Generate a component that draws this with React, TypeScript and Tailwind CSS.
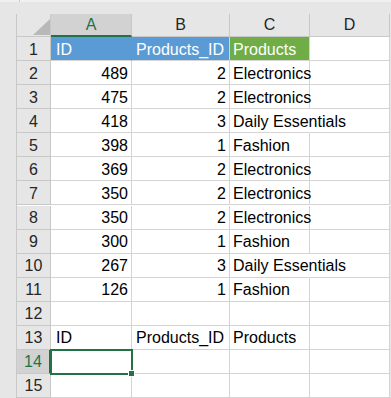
import React from 'react';

type Row = { id: number; pid: number; product: string };

const data: Row[] = [
  { id: 489, pid: 2, product: 'Electronics' },
  { id: 475, pid: 2, product: 'Electronics' },
  { id: 418, pid: 3, product: 'Daily Essentials' },
  { id: 398, pid: 1, product: 'Fashion' },
  { id: 369, pid: 2, product: 'Electronics' },
  { id: 350, pid: 2, product: 'Electronics' },
  { id: 350, pid: 2, product: 'Electronics' },
  { id: 300, pid: 1, product: 'Fashion' },
  { id: 267, pid: 3, product: 'Daily Essentials' },
  { id: 126, pid: 1, product: 'Fashion' },
];

const cell = 'h-[24px] border-r border-b border-[#d4d4d4] flex items-center pt-[2px] whitespace-nowrap';
const rowHead = 'h-[24px] border-r border-b border-[#c8c8c8] bg-[#e6e6e6] flex items-center justify-center pt-[2px] text-[#262626]';
const colHead = 'h-[23px] border-r border-b border-[#c8c8c8] bg-[#e6e6e6] flex items-center justify-center text-[#262626]';

const RowHeader = ({ n, selected }: { n: number; selected?: boolean }) => (
  <div className={selected ? 'h-[24px] border-r-2 border-b border-r-[#217346] border-b-[#c8c8c8] bg-[#d2d2d2] flex items-center justify-center pt-[2px] text-[#217346]' : rowHead}>
    {n}
  </div>
);

export default function App() {
  return (
    <div className="w-[391px] h-[398px] bg-[#e6e6e6] overflow-hidden font-['Liberation_Sans',Arial,sans-serif] text-[16px] leading-[18px] text-black">
      {/* ribbon edge */}
      <div className="h-[14px] border-t-2 border-[#f0f0f0] flex">
        <div className="w-[19px]" />
        <div className="w-px h-[2px] bg-[#c8c8c8] -mt-[2px]" />
      </div>

      <div className="flex">
        <div className="w-[17px] h-[384px] border-r border-[#c8c8c8]" />

        <div className="grid grid-cols-[34px_81px_98px_80px_80px] bg-white">
          {/* column headers */}
          <div className="h-[23px] border-r border-b border-[#c8c8c8] bg-[#e6e6e6] flex items-end justify-end pb-[1px]">
            <svg width="17" height="16" viewBox="0 0 17 16">
              <polygon points="17,0 17,16 0,16" fill="#b8b8b8" />
            </svg>
          </div>
          <div className="h-[23px] border-r border-b-2 border-r-[#c8c8c8] border-b-[#217346] bg-[#d2d2d2] flex items-center justify-center pt-[1px] text-[#217346]">A</div>
          <div className={colHead}>B</div>
          <div className={colHead}>C</div>
          <div className={colHead}>D</div>

          {/* row 1 */}
          <RowHeader n={1} />
          <div className="h-[24px] border-r border-b border-[#d4d4d4] bg-[#5b9bd5] border-r-[#5b9bd5] flex items-center pt-[2px] pl-[5px] text-white">ID</div>
          <div className="h-[24px] border-r border-b border-[#d4d4d4] bg-[#5b9bd5] flex items-center pt-[2px] pl-[4px] text-white whitespace-nowrap">Products_ID</div>
          <div className="h-[24px] border-r border-b border-[#d4d4d4] bg-[#70ad47] flex items-center pt-[2px] pl-[3px] text-white">Products</div>
          <div className={cell} />

          {data.map((r, i) => (
            <React.Fragment key={i}>
              <RowHeader n={i + 2} />
              <div className={`${cell} justify-end pr-[3px]`}>{r.id}</div>
              <div className={`${cell} justify-end pr-[3px]`}>{r.pid}</div>
              <div className={`${cell} pl-[3px] ${r.product.length > 11 ? 'border-r-white' : ''}`}>{r.product}</div>
              <div className={cell} />
            </React.Fragment>
          ))}

          {/* row 12 */}
          <RowHeader n={12} />
          <div className={cell} />
          <div className={cell} />
          <div className={cell} />
          <div className={cell} />

          {/* row 13 */}
          <RowHeader n={13} />
          <div className={`${cell} pl-[5px]`}>ID</div>
          <div className={`${cell} pl-[4px]`}>Products_ID</div>
          <div className={`${cell} pl-[3px]`}>Products</div>
          <div className={cell} />

          {/* row 14 (selected) */}
          <RowHeader n={14} selected />
          <div className={`${cell} relative`}>
            <div className="absolute -left-[1px] -top-[1px] w-[83px] h-[26px] border-2 border-[#217346]" />
            <div className="absolute -right-[4px] -bottom-[4px] w-[7px] h-[7px] bg-[#217346] border border-white" />
          </div>
          <div className={cell} />
          <div className={cell} />
          <div className={cell} />

          {/* row 15 */}
          <RowHeader n={15} />
          <div className={cell} />
          <div className={cell} />
          <div className={cell} />
          <div className={cell} />
        </div>
      </div>
    </div>
  );
}
